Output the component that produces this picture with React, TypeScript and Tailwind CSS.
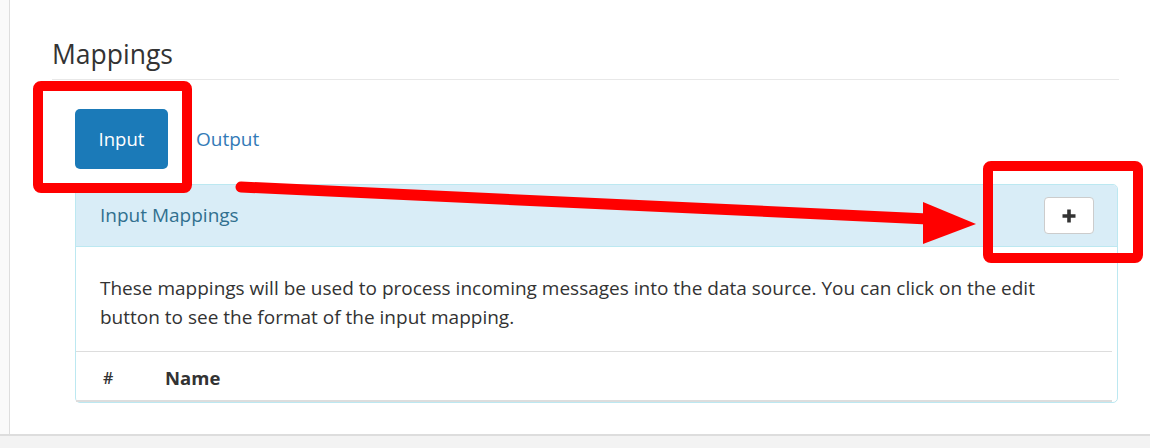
import React from "react";

const font = { fontFamily: '"Open Sans", "Noto Sans", Arial, sans-serif' };

const Annotations = () => {
  return (
    <svg
      className="absolute left-0 top-0 pointer-events-none"
      width={1150}
      height={448}
      viewBox="0 0 1150 448"
    >
      {/* box around the Input tab */}
      <rect x={38} y={86} width={149} height={102} rx={3} fill="none" stroke="#ff0000" strokeWidth={10} />
      {/* box around the add button */}
      <rect x={988} y={166} width={150} height={92} rx={3} fill="none" stroke="#ff0000" strokeWidth={10} />
      {/* arrow */}
      <line x1={241} y1={187} x2={928} y2={219} stroke="#ff0000" strokeWidth={11} strokeLinecap="round" />
      <polygon points="923,202 976,224 923,244" fill="#ff0000" />
    </svg>
  );
};

const App = () => {
  return (
    <div className="relative w-[1150px] h-[448px] bg-white overflow-hidden flex flex-col" style={font}>
      <div className="flex flex-1 min-h-0">
        {/* left page edge */}
        <div className="w-[10px] bg-[#fafafa] border-r border-[#dedede]" />

        <div className="flex-1 pl-[42px] pr-[31px] pt-[38px]">
          <h4 className="text-[26.5px] leading-[32px] font-medium text-[#333] pb-[9px] border-b border-[#e8e8e8]">
            Mappings
          </h4>

          <div className="flex items-center pl-[23px] mt-[29px]">
            <button className="w-[93px] h-[60px] rounded-[5px] bg-[#1b7ab8] text-white text-[18.5px]">
              Input
            </button>
            <a className="ml-[28px] text-[19px] text-[#337ab7]">Output</a>
          </div>

          <div className="ml-[23px] mr-px mt-[15px] border border-[#bce8f1] rounded-[5px]">
            <div className="h-[62px] flex items-center justify-between pl-[24px] pr-[23px] bg-[#d9edf7] border-b border-[#bce8f1] rounded-t-[4px]">
              <span className="text-[19px] text-[#31708f]">Input Mappings</span>
              <button className="w-[50px] h-[37px] bg-white border border-[#ccc] rounded-[4px] flex items-center justify-center">
                <svg width="16" height="16" viewBox="0 0 16 16">
                  <path d="M8 1.5v13M1.5 8h13" stroke="#333" strokeWidth="3.6" />
                </svg>
              </button>
            </div>

            <div className="pt-[27px]">
              <p className="pl-[24px] pr-[40px] text-[19px] leading-[29px] text-[#333]">
                These mappings will be used to process incoming messages into the data source. You can click on the edit button to see the format of the input mapping.
              </p>
              <div className="mt-[19px] mr-[5px] border-t border-[#ddd] border-b-2 border-b-[#ddd] h-[51px] flex items-center pt-[3px] text-[18.5px] text-[#333]">
                <span className="w-[89px] pl-[27px] text-[16px] font-semibold">#</span>
                <span className="font-bold">Name</span>
              </div>
            </div>
          </div>
        </div>
      </div>

      {/* bottom page strip */}
      <div className="h-[14px] bg-[#f3f3f3] border-t-2 border-[#dddddd]" />

      <Annotations />
    </div>
  );
};

export default App;
